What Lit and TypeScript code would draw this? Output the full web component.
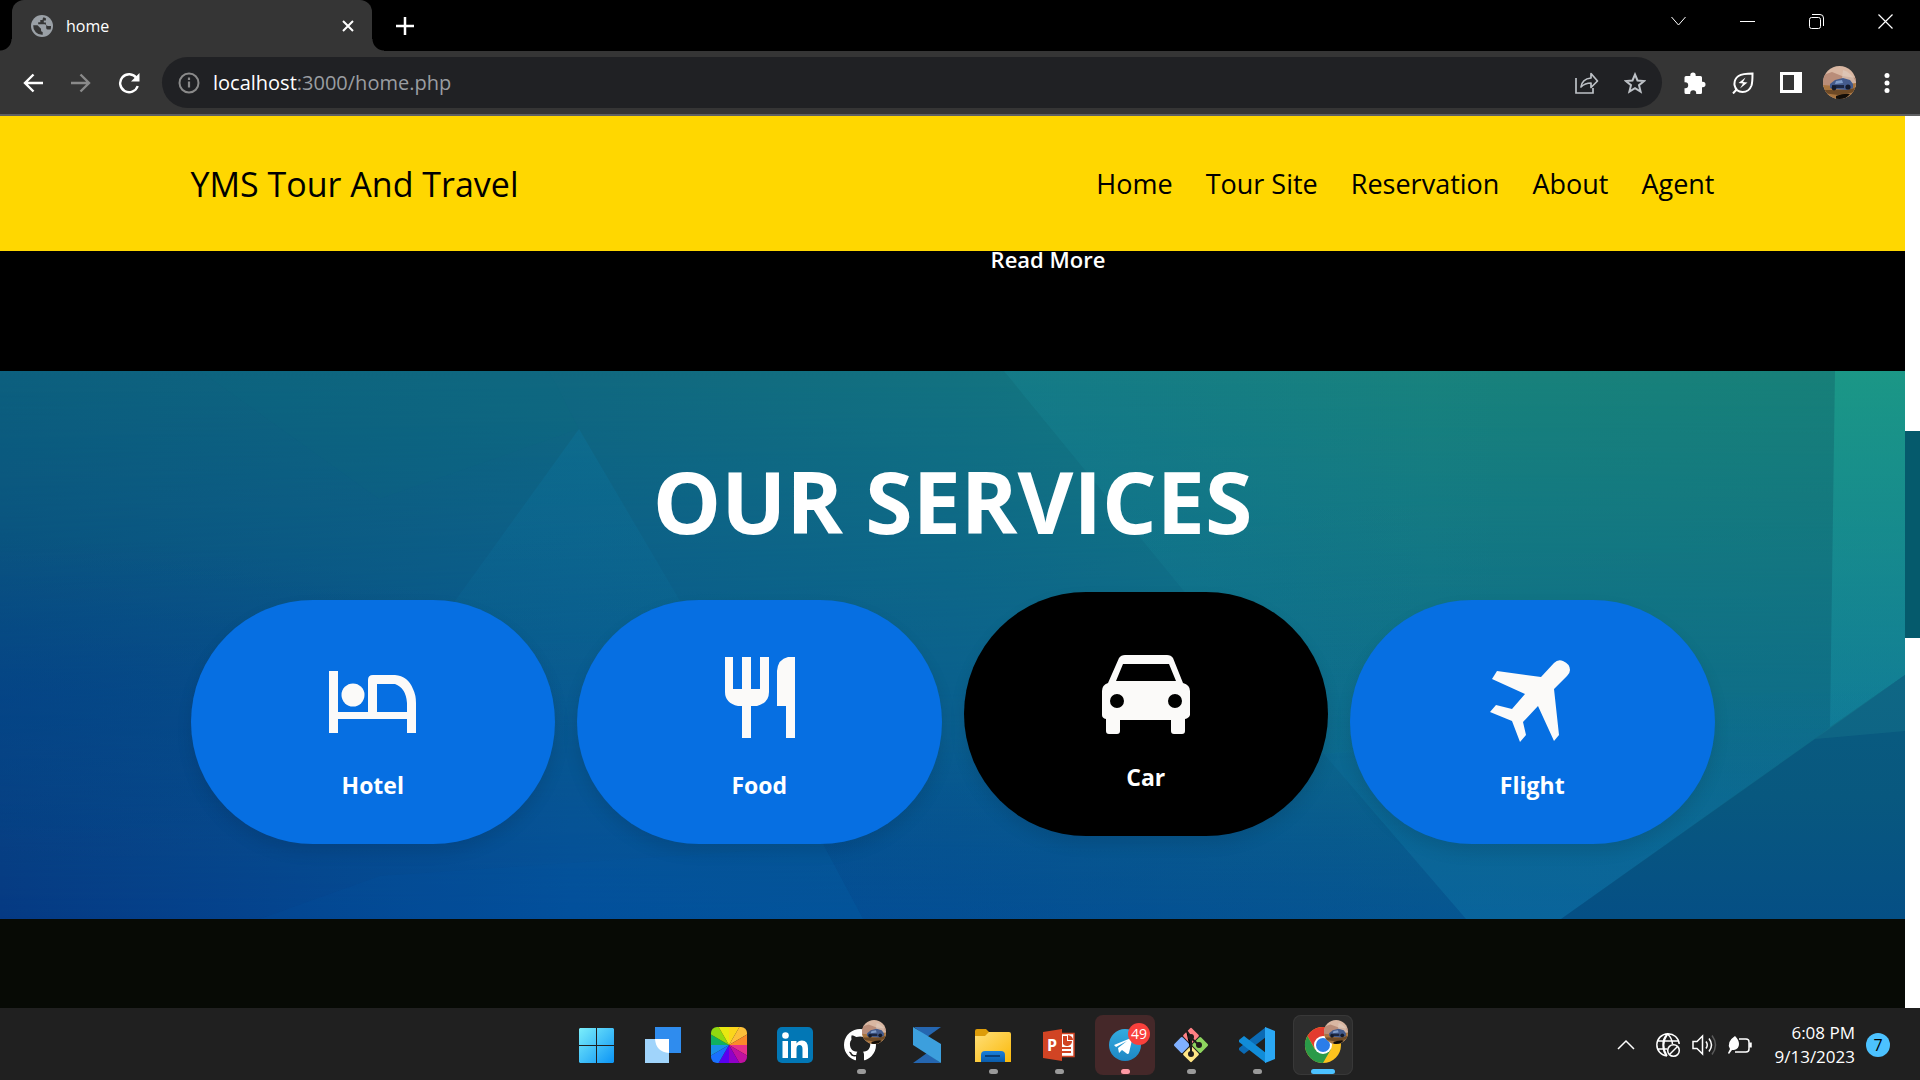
import { LitElement, html, css, svg, nothing } from "lit";
import { customElement } from "lit/decorators.js";
import { classMap } from "lit/directives/class-map.js";

const AVATAR = svg`
  <g clip-path="url(#avatar-clip)">
    <rect width="33" height="33" fill="#d9b7a2"/>
    <path d="M0 9l9-3 10 4 14 2v9H0z" fill="#b98d79"/>
    <path d="M20 4q8 2 13 12v5H18z" fill="#e0cdbf" opacity=".6"/>
    <path d="M0 19l12 1 21-3v16H0z" fill="#a9753f"/>
    <path d="M0 24l20 0 13-2v4l-18 3-15-2z" fill="#6e4a26"/>
    <path d="M13 30q8-3 14-2l-5 5h-9z" fill="#120d08"/>
    <path d="M7 18l5-4 8-2 7 2 3 4v4l-6 2-14-1-3-1z" fill="#445b8c"/>
    <path d="M13 15l6-1 1 3-8 1z" fill="#7f9cc9"/>
    <path d="M9 19h12v3H9z" fill="#1c2742"/>
    <circle cx="11" cy="22" r="2.4" fill="#141a2a"/><circle cx="25" cy="21" r="2.6" fill="#141a2a"/>
  </g>`;

const AVATAR_CLIP = svg`<clipPath id="avatar-clip"><circle cx="16.500" cy="16.500" r="16.500"/></clipPath>`;

@customElement("browser-chrome")
export class BrowserChrome extends LitElement {
  static styles = css`
    :host { display: block; font-family: "Open Sans", "Noto Sans", sans-serif; color: #fff; }
    button { display: grid; place-items: center; margin: 0; padding: 0; border: 0; background: none; color: inherit; font: inherit; }
    svg { display: block; fill: none; stroke: currentColor; }
    .solid { fill: currentColor; stroke: none; }
    .strip { display: flex; height: 51px; background: #000; }
    .tab { position: relative; display: flex; align-items: center; width: 360px; height: 51px; margin-left: 12px; padding: 0 12px 0 19px; box-sizing: border-box; border-radius: 12px 12px 0 0; background: #353535; font-size: 16px; }
    .tab::before, .tab::after { content: ""; position: absolute; bottom: 0; width: 12px; height: 12px; }
    .tab::before { left: -12px; background: radial-gradient(circle at 0 0, #000 11px, #353535 12px); }
    .tab::after { right: -12px; background: radial-gradient(circle at 100% 0, #000 11px, #353535 12px); }
    .title { flex: 1; margin-left: 13px; }
    .close { width: 24px; height: 24px; }
    .plus { width: 42px; margin-left: 12px; }
    .window { display: flex; height: 42px; margin-left: auto; }
    .window button { width: 69px; }
    .bar { display: flex; align-items: center; height: 63px; padding: 0 9px; background: #353535; border-bottom: 2px solid #5f6062; }
    .bar button { width: 48px; height: 48px; }
    .bar .dim { color: #8a8a8a; }
    .omni { display: flex; flex: 1; align-items: center; height: 51px; margin: 0 9px; padding: 0 3px; border-radius: 26px; background: #202124; color: #bdc1c6; }
    .url { flex: 1; font-size: 20px; line-height: 28px; color: #9a9da1; }
    .url b { font-weight: 400; color: #fff; }
  `;

  render() {
    return html`
      <div class="strip">
        <div class="tab">
          <svg class="solid" width="22" height="22" viewBox="0 0 22 22">
            <circle cx="11" cy="11" r="11" fill="#9aa0a6"/>
            <path d="M12.500 2.300q-1 1-1 2.700H9.300v2.200H7.200v2.100h6.500q1.500 0 1.500 1.700v2q0 1.500 1.700 1.500h2.700A9 9 0 0 0 20 11h-3q-2.100 0-2.100-2V7.500h-2.100V5.400h2.100V3.200zM2.200 10.200h4.300l3.500 3.500v1.500q0 1.700 1.700 1.700v2.900A9 9 0 0 1 2.200 10.200z" fill="#353535"/>
          </svg>
          <span class="title">home</span>
          <button class="close" aria-label="Close tab"><svg width="12" height="12" viewBox="0 0 12 12" stroke-width="2"><path d="M1 1l10 10M11 1L1 11"/></svg></button>
        </div>
        <button class="plus" aria-label="New tab"><svg width="18" height="18" viewBox="0 0 18 18" stroke-width="2.500"><path d="M9 0v18M0 9h18"/></svg></button>
        <div class="window">
          <button aria-label="Search tabs"><svg width="15" height="10" viewBox="0 0 15 10"><path d="M.5 1l7 8 7-8"/></svg></button>
          <button aria-label="Minimize"><svg width="15" height="15" viewBox="0 0 15 15"><path d="M0 7.500h15"/></svg></button>
          <button aria-label="Restore"><svg width="15" height="15" viewBox="0 0 15 15"><rect x=".5" y="3.500" width="11" height="11" rx="2"/><path d="M3 .5h8q3.500 0 3.500 3.500v8"/></svg></button>
          <button aria-label="Close"><svg width="15" height="15" viewBox="0 0 15 15" stroke-width="1.200"><path d="M.5.5l14 14M14.500.5l-14 14"/></svg></button>
        </div>
      </div>
      <div class="bar">
        <button aria-label="Back"><svg width="20" height="20" viewBox="0 0 20 20" stroke-width="2.400"><path d="M20 10H2M10.500 1.500L2 10l8.500 8.500"/></svg></button>
        <button class="dim" aria-label="Forward"><svg width="20" height="20" viewBox="0 0 20 20" stroke-width="2.400"><path d="M0 10h18M9.500 1.500L18 10l-8.500 8.500"/></svg></button>
        <button aria-label="Reload"><svg width="22" height="22" viewBox="0 0 22 22" stroke-width="2.400"><path d="M18.500 6a9 9 0 1 0 1.200 8"/><path d="M21.500 1v8.500H13z" fill="currentColor" stroke="none"/></svg></button>
        <div class="omni">
          <button class="dim" aria-label="Site information"><svg width="22" height="22" viewBox="0 0 22 22" stroke-width="2"><circle cx="11" cy="11" r="9.500"/><path d="M11 9.500v6M11 5.500v2.400" stroke-width="2.200"/></svg></button>
          <span class="url"><b>localhost</b>:3000/home.php</span>
          <button aria-label="Share"><svg width="24" height="22" viewBox="0 0 24 22" stroke-width="1.700"><path d="M1 6v15h17v-5"/><path d="M6 15q1-8 10-9V1.500L22.500 9 16 15.500V11q-6 0-10 4z" stroke-linejoin="round"/></svg></button>
          <button aria-label="Bookmark"><svg width="22" height="22" viewBox="0 0 22 22" stroke-width="2"><path d="M11 2.500l2.500 6 6.500.5-5 4.200 1.600 6.400L11 16.200l-5.600 3.400L7 13.200 2 9l6.500-.5z"/></svg></button>
        </div>
        <button aria-label="Extensions"><svg class="solid" width="22" height="22" viewBox="0 0 22 22"><path d="M6.300 4V3.200a2.700 2.700 0 1 1 5.400 0V4h4.800q1.500 0 1.500 1.500v4.300h.8a2.700 2.700 0 1 1 0 5.400H18v5.300q0 1.500-1.500 1.500h-4.300v-.7a3 3 0 0 0-6 0v.7H2q-1.500 0-1.500-1.500v-4.300h.7a3 3 0 0 0 0-6H.5V5.500Q.5 4 2 4z"/></svg></button>
        <button aria-label="Energy saver"><svg width="22" height="22" viewBox="0 0 22 22" stroke-width="2"><path d="M20.500 1.500q0 9-1 12-2.500 6.500-9 6.500t-8-7q-.5-6 4-9 4-2.500 14-2.500zM5 17l-4 4.500"/><path d="M13.500 5.500l-7 5.500 4.500.5L8 16.500l7.500-6-4.500-.5z" fill="currentColor" stroke="none"/></svg></button>
        <button aria-label="Side panel"><svg class="solid" width="22" height="21" viewBox="0 0 22 21"><path d="M0 0h22v21H0zM3 3v15h11V3z" fill-rule="evenodd"/></svg></button>
        <button aria-label="Profile"><svg class="solid" width="33" height="33" viewBox="0 0 33 33"><defs>${AVATAR_CLIP}</defs>${AVATAR}</svg></button>
        <button aria-label="Menu"><svg class="solid" width="6" height="20" viewBox="0 0 6 20"><circle cx="3" cy="2.500" r="2.500"/><circle cx="3" cy="10" r="2.500"/><circle cx="3" cy="17.500" r="2.500"/></svg></button>
      </div>
    `;
  }
}

const SERVICES = [
  { name: "Hotel", active: false, icon: svg`
    <path d="M4 20h9v41h30V29q0-5 5-5h22q13 1 18 14 3 6 3 14v30h-9V68H13v14H4zM52 33v28h30V52q-1-15-12-19z" fill-rule="evenodd"/><circle cx="28" cy="44" r="11.500"/>` },
  { name: "Food", active: false, icon: svg`
    <path d="M14 6h8v32h9V6h9v32h9V6h9v35q0 11-12 14h-6v32h-9V55h-4Q14 52 14 41zM84 6v81h-9V55h-9V20q1-12 11-14z"/>` },
  { name: "Car", active: true, icon: svg`
    <path d="M21 15q2-3 6-3h42q4 0 6 3l10 25q7 2 7 8v24q-1 3-5 4v12q0 3-3 3h-8q-3 0-3-3V77H22v11q0 3-3 3h-8q-3 0-3-3V76q-4-1-4-4V48q0-6 6-8zM25 21l-7 17h60l-7-17zM19 51a7 7 0 1 0 0 14 7 7 0 0 0 0-14zM77 51a7 7 0 1 0 0 14 7 7 0 0 0 0-14z" fill-rule="evenodd"/>` },
  { name: "Flight", active: false, icon: svg`
    <path d="M70 12q4-4 9-2 7 3 7 9 0 3-3 6L70 38l5 46-5 6-16-35-15 16 3 13-6 7-8-21L6 61l6-7 16 4 13-15L8 28l5-8 44 6z"/>` },
];

@customElement("travel-page")
export class TravelPage extends LitElement {
  static styles = css`
    :host { display: flex; flex-direction: column; font-family: "Open Sans", "Noto Sans", sans-serif; color: #fff; background: #070a05; }
    a { color: inherit; text-decoration: none; }
    .header { display: flex; align-items: center; justify-content: space-between; height: 135px; padding: 0 10%; background: #ffd700; color: #000; }
    .brand { font-size: 34px; font-weight: 500; line-height: 48px; }
    .nav { display: flex; gap: 33px; font-size: 27px; font-weight: 500; line-height: 40px; }
    .intro { height: 120px; padding-left: 52%; background: #000; }
    .more { display: block; font-size: 22px; font-weight: 600; line-height: 16px; }
    .services { display: grid; height: 548px; background: #0b6589; }
    .backdrop, .content { grid-area: 1 / 1; min-width: 0; min-height: 0; }
    .backdrop { width: 100%; height: 100%; }
    .content { padding: 82px 10% 0; }
    h2 { margin: 0 0 51px; font-size: 86px; line-height: 96px; text-align: center; font-weight: 700; }
    .cards { display: grid; grid-template-columns: repeat(4, 1fr); gap: 22px; }
    .card { display: flex; flex-direction: column; align-items: center; height: 244px; padding-top: 51px; box-sizing: border-box; border-radius: 122px; background: #066fe2; box-shadow: 0 8px 16px rgba(0, 0, 0, 0.1); }
    .card svg { fill: #fbfaf9; }
    .card h3 { margin: 20px 0 0; font-size: 23px; line-height: 36px; font-weight: 700; }
    .active { background: #000; transform: translateY(-8px); }
  `;

  render() {
    return html`
      <header class="header">
        <a class="brand" href="#">YMS Tour And Travel</a>
        <nav class="nav">
          ${["Home", "Tour Site", "Reservation", "About", "Agent"].map((t) => html`<a href="#">${t}</a>`)}
        </nav>
      </header>
      <section class="intro"><a class="more" href="#">Read More</a></section>
      <section class="services">
        <svg class="backdrop" viewBox="0 0 1905 548" preserveAspectRatio="none" aria-hidden="true">
          <defs>
            <linearGradient id="top"><stop offset="0" stop-color="#0c607e"/><stop offset=".3" stop-color="#10687f"/><stop offset=".5" stop-color="#127280"/><stop offset=".75" stop-color="#18827c"/><stop offset="1" stop-color="#178078"/></linearGradient>
            <linearGradient id="bottom"><stop offset="0" stop-color="#063a84"/><stop offset=".3" stop-color="#044f9b"/><stop offset=".5" stop-color="#055497"/><stop offset=".75" stop-color="#085f93"/><stop offset="1" stop-color="#0a6490"/></linearGradient>
            <linearGradient id="fade" x2="0" y2="1"><stop offset="0" stop-color="#fff"/><stop offset="1" stop-color="#000"/></linearGradient>
            <radialGradient id="deep" cx="0" cy=".6" r=".3"><stop offset="0" stop-color="#003f8c" stop-opacity=".45"/><stop offset="1" stop-color="#003f8c" stop-opacity="0"/></radialGradient>
            <linearGradient id="facet"><stop offset="0" stop-color="#1a9aa8" stop-opacity=".18"/><stop offset=".6" stop-color="#1a9aa8" stop-opacity="0"/></linearGradient>
            <linearGradient id="edge" x2="0" y2="1"><stop offset="0" stop-color="#1fae94" stop-opacity=".5"/><stop offset="1" stop-color="#158fa8" stop-opacity=".45"/></linearGradient>
            <linearGradient id="wedge" x2="0" y2="1"><stop offset="0" stop-color="#0a6fa0" stop-opacity="0"/><stop offset="1" stop-color="#0c68a4" stop-opacity=".5"/></linearGradient>
            <linearGradient id="corner" x2="0" y2="1"><stop offset="0" stop-color="#0a5c80"/><stop offset=".5" stop-color="#08587f"/><stop offset="1" stop-color="#054f85"/></linearGradient>
            <linearGradient id="peak" x2="0" y2="1"><stop offset="0" stop-color="#0a80b0" stop-opacity=".22"/><stop offset="1" stop-color="#0a80b0" stop-opacity="0"/></linearGradient>
            <linearGradient id="shade" x2="0" y2="1"><stop offset="0" stop-color="#043c78" stop-opacity="0"/><stop offset="1" stop-color="#034790" stop-opacity=".4"/></linearGradient>
            <mask id="blend"><rect width="1905" height="548" fill="url(#fade)"/></mask>
          </defs>
          <rect width="1905" height="548" fill="url(#bottom)"/>
          <rect width="1905" height="548" fill="url(#top)" mask="url(#blend)"/>
          <rect width="1905" height="548" fill="url(#deep)"/>
          <path d="M579 58L455 230 380 380h380l-80-150z" fill="url(#peak)"/>
          <path d="M549 0l30 58-200 70L200 0z" fill="#0a7080" opacity=".08"/>
          <path d="M1004 0l184 225 136 158 506-27V0z" fill="url(#facet)"/>
          <path d="M1835 0h70v304l-75 52z" fill="url(#edge)"/>
          <path d="M1324 383l142 165h95l269-192 75-52z" fill="url(#wedge)"/>
          <path d="M1905 304L1561 548h344z" fill="url(#corner)"/>
          <path d="M1905 304l-75 52-15 12 90-8z" fill="#1a7a90" opacity=".35"/>
          <path d="M1324 383l142 165H863l-39-73-60-115z" fill="url(#shade)"/>
          <path d="M863 548l-39-73-444 30-120 43z" fill="#0458b0" opacity=".12"/>
        </svg>
        <div class="content">
          <h2>OUR SERVICES</h2>
          <div class="cards">
            ${SERVICES.map((s) => html`
              <article class=${classMap({ card: true, active: s.active })}>
                <svg width="96" height="96" viewBox="0 0 96 96" aria-hidden="true">${s.icon}</svg>
                <h3>${s.name}</h3>
              </article>`)}
          </div>
        </div>
      </section>
    `;
  }
}

const BADGE = svg`<defs>${AVATAR_CLIP}</defs><g transform="translate(19 -7) scale(.73)">${AVATAR}</g>`;

const WHEEL = ["#fbd51c", "#fdc03a", "#fb8a2a", "#e8308a", "#c010a0", "#9000c8", "#5a00f0", "#1a70ff", "#1a90e8", "#10b060", "#90d810", "#e8e810"];

function wedges() {
  return WHEEL.map((fill, i) => {
    const at = (k: number) => {
      const a = (k * Math.PI) / 6 - Math.PI / 2;
      return `${18 + 30 * Math.cos(a)} ${18 + 30 * Math.sin(a)}`;
    };
    return svg`<path fill=${fill} d="M18 18L${at(i)} ${at(i + 1)}z"/>`;
  });
}

const APPS = [
  { name: "Start", state: "", icon: svg`<defs><linearGradient id="win" x2="1" y2="1" gradientUnits="userSpaceOnUse" gradientTransform="scale(36)"><stop stop-color="#7df0fb"/><stop offset="1" stop-color="#0a93f5"/></linearGradient></defs><path fill="url(#win)" d="M1 1h16v17H0V2zM18 1h16l1 1v16H18zM0 19h17v17H1l-1-1zM18 19h17v16l-1 1H18z"/>` },
  { name: "Tasks", state: "", icon: svg`<path fill="#2f8cee" d="M10 0h26v26H10z"/><path fill="#a0d4fb" d="M0 12h24v24H0z"/><path fill="#fff" d="M10 12h14v14Q11 25 10 12z"/>` },
  { name: "Colors", state: "", icon: svg`<defs><clipPath id="wheel"><rect width="36" height="36" rx="6"/></clipPath></defs><g clip-path="url(#wheel)">${wedges()}</g>` },
  { name: "LinkedIn", state: "", icon: svg`<rect width="36" height="36" rx="5" fill="#0277b5"/><g fill="#fff"><circle cx="8.500" cy="8.500" r="3.300"/><path d="M5.500 14H11v17H5.500zM14 14h5.500v2.500q2-3 5.500-3 6 0 6 8V31h-5.500v-9q0-4-3-4t-3 4v9H14z"/></g>` },
  { name: "GitHub", state: "open", icon: svg`<path fill="#fff" d="M17 2a16 16 0 0 0-5 31.200c1 .2 1-.5 1-1v-3c-4.500 1-5.500-2-5.500-2-.7-1.800-1.700-2.300-1.700-2.300 1.600-.5 2.600.8 3 1.500 1.500 2.400 3.800 1.700 4.600 1.300q0-2 1-3c-4-.5-7.500-1.800-7.500-8q0-2.600 1.600-4.300-.7-2 .2-4.200 2 0 4.500 1.700 4-1 8 0 2-1.700 4.300-1.700.9 2.200.2 4.200 1.600 1.700 1.600 4.300c0 6.200-3.500 7.500-7.300 8q1 1 1 3v4.500c0 .5 0 1.200 1 1A16 16 0 0 0 17 2z"/>${BADGE}` },
  { name: "Sublime", state: "", icon: svg`<path fill="#2566b0" d="M5 0h27L18 10zM4 36h28L18 26z"/><path fill="#3c9fdd" d="M4 0l28 17v19L4 18z"/>` },
  { name: "File Explorer", state: "open", icon: svg`<defs><linearGradient id="folder" x2="1" y2="1"><stop stop-color="#ffdf78"/><stop offset="1" stop-color="#fbb90a"/></linearGradient><linearGradient id="tray" x2="0" y2="1"><stop stop-color="#1b80dc"/><stop offset="1" stop-color="#0a5cab"/></linearGradient></defs><path fill="#dd9c09" d="M0 4q0-2 2-2h9l4 4h6v6H0z"/><path fill="url(#folder)" d="M0 9h10l4-4h20q2 0 2 2v28H0z"/><path fill="url(#tray)" d="M6 35v-7q0-4 4-4h16q4 0 4 4v7z"/><path stroke="#0a3f78" stroke-width="2" d="M10 29h15"/>` },
  { name: "PowerPoint", state: "open", icon: svg`<path fill="#fff" stroke="#d14424" stroke-width="1.500" d="M18 6.500h15v23H18z"/><path fill="#d14424" d="M22 9h4v5h5a5 5 0 0 1-9 3zM27 8q5 1 5 5h-5zM21 20h9v2h-9zM21 24h9v2h-9z"/><path fill="#d14424" d="M2 5l19-3v32L2 31z"/>`, text: { x: 6, y: 24, value: "P", size: 16 } },
  { name: "Telegram", state: "open alert", icon: svg`<defs><linearGradient id="tg" x2="0" y2="1"><stop stop-color="#34abe0"/><stop offset="1" stop-color="#1d87c4"/></linearGradient></defs><circle cx="18" cy="18" r="16" fill="url(#tg)"/><path fill="#fff" d="M7 18l17-7q2 0 1 2l-3 13q-1 2-3 0l-4-3-3 3-1-5 9-7-11 6z"/><circle cx="32" cy="7" r="11" fill="#f9403c"/>`, text: { x: 24, y: 12, value: "49", size: 14 } },
  { name: "Git", state: "open", icon: svg`<g transform="rotate(45 18 18)"><rect x="5.500" y="5.500" width="12" height="12" rx="1.500" fill="#ff8084"/><rect x="18.500" y="5.500" width="12" height="12" rx="1.500" fill="#8ed55e"/><rect x="5.500" y="18.500" width="12" height="12" rx="1.500" fill="#80b0ff"/><rect x="18.500" y="18.500" width="12" height="12" rx="1.500" fill="#ffe585"/></g><g stroke="#201c1c" stroke-width="2"><path d="M13 3l5 7v17M18 11l8 7"/></g><g fill="#201c1c"><circle cx="18" cy="10" r="3"/><circle cx="26" cy="18" r="3"/><circle cx="18" cy="27" r="3"/></g>` },
  { name: "Code", state: "open", icon: svg`<path fill="#0b6ab4" d="M27 0v10L5 27l-5-4v-2z"/><path fill="#118cd8" d="M5 9l22 17v10L0 15v-2z"/><path fill="#2aa7f4" d="M26 0l10 4v28l-10 4z"/>` },
  { name: "Chrome", state: "open current", icon: svg`<circle cx="18" cy="18" r="18" fill="#fcc31e"/><path fill="#e33b2e" d="M2.400 9A18 18 0 0 1 33.600 9L18 9 10 22z"/><path fill="#2a9a48" d="M2.400 9A18 18 0 0 0 18 36l7.800-13.500L10 22.500z"/><circle cx="18" cy="18" r="9" fill="#fff"/><circle cx="18" cy="18" r="7" fill="#2b7de9"/>${BADGE}` },
];

@customElement("task-bar")
export class TaskBar extends LitElement {
  static styles = css`
    :host { display: grid; grid-template-columns: 1fr auto 1fr; align-items: center; height: 72px; padding-top: 2px; box-sizing: border-box; background: #202020; color: #fff; font-family: "Open Sans", "Noto Sans", sans-serif; }
    button { margin: 0; padding: 0; border: 0; background: none; color: inherit; font: inherit; }
    svg { display: block; overflow: visible; }
    .apps { display: flex; grid-column: 2; gap: 6px; }
    .app { position: relative; display: grid; place-items: center; width: 60px; height: 60px; border-radius: 8px; }
    .open::after { content: ""; position: absolute; left: 26px; bottom: 1px; width: 9px; height: 5px; border-radius: 3px; background: #9a9a9a; }
    .alert { background: #452829; }
    .alert::after { background: #ff99a4; }
    .current { background: #2d2d2d; box-shadow: inset 0 0 0 1px #383838; }
    .current::after { left: 18px; width: 24px; background: #4cc2ff; }
    .tray { display: flex; justify-content: flex-end; align-items: center; padding-right: 30px; }
    .tray svg { fill: none; stroke: #fff; stroke-width: 1.5; }
    .icon { display: grid; place-items: center; width: 36px; height: 48px; }
    .up { margin-right: 6px; }
    .clock { margin: 0 11px 0 13px; min-width: 84px; font-size: 17px; line-height: 24px; text-align: right; }
    .count { width: 24px; height: 24px; border-radius: 50%; background: #4cc2ff; color: #000; font-size: 16px; line-height: 24px; }
  `;

  render() {
    return html`
      <div class="apps">
        ${APPS.map((a) => html`
          <button class="app ${a.state}" aria-label=${a.name}>
            <svg width="36" height="36" viewBox="0 0 36 36">${a.icon}${a.text
              ? svg`<text x=${a.text.x} y=${a.text.y} font-size=${a.text.size} font-weight=${a.text.value === "P" ? 700 : 400} fill="#fff">${a.text.value}</text>`
              : nothing}</svg>
          </button>`)}
      </div>
      <div class="tray">
        <button class="icon up" aria-label="Show hidden icons"><svg width="18" height="10" viewBox="0 0 18 10"><path d="M1 9l8-8 8 8"/></svg></button>
        <button class="icon" aria-label="Network"><svg width="24" height="24" viewBox="0 0 24 24"><path d="M11 23A11.200 11.200 0 1 1 23.200 11M1.500 8h21M1.500 16H11M11 23Q4 12 11.500 1 16 5 16.500 11M11.500 1Q7 5 7 12t4 11"/><circle cx="17.500" cy="17.500" r="5.800"/><path d="M13.500 21.500l8-8"/></svg></button>
        <button class="icon" aria-label="Volume"><svg width="24" height="22" viewBox="0 0 24 22"><path d="M1 7.500h4L10.500 2v18L5 14.500H1z"/><path d="M14 7.500q2.500 3.500 0 7M17 4.500q5 6.500 0 13"/><path d="M20 1.500q7 9.500 0 19" stroke="#5a5a5a"/></svg></button>
        <button class="icon" aria-label="Battery"><svg width="24" height="18" viewBox="0 0 24 18"><path d="M11 3h7q3 0 3 3v7q0 3-3 3H7"/><path d="M22.500 6.500v5" stroke-width="2.500"/><path d="M7 0q4 4 4 8 0 5-5 6l-2 0-3 4-1-1 2-4Q-2 6 7 0z" fill="#fff" stroke="none"/></svg></button>
        <div class="clock">6:08 PM<br>9/13/2023</div>
        <button class="count" aria-label="Notifications">7</button>
      </div>
    `;
  }
}

@customElement("app-root")
export class AppRoot extends LitElement {
  static styles = css`
    :host { display: flex; flex-direction: column; min-height: 100vh; background: #000; }
    .view { display: flex; flex: 1; }
    travel-page { flex: 1; min-width: 0; }
    .scroll { display: grid; grid-template-rows: 315fr 207fr 370fr; width: 15px; background: #fff; }
    .thumb { grid-row: 2; background: #055a6c; }
  `;

  render() {
    return html`
      <browser-chrome></browser-chrome>
      <main class="view">
        <travel-page></travel-page>
        <div class="scroll"><div class="thumb"></div></div>
      </main>
      <task-bar></task-bar>
    `;
  }
}
